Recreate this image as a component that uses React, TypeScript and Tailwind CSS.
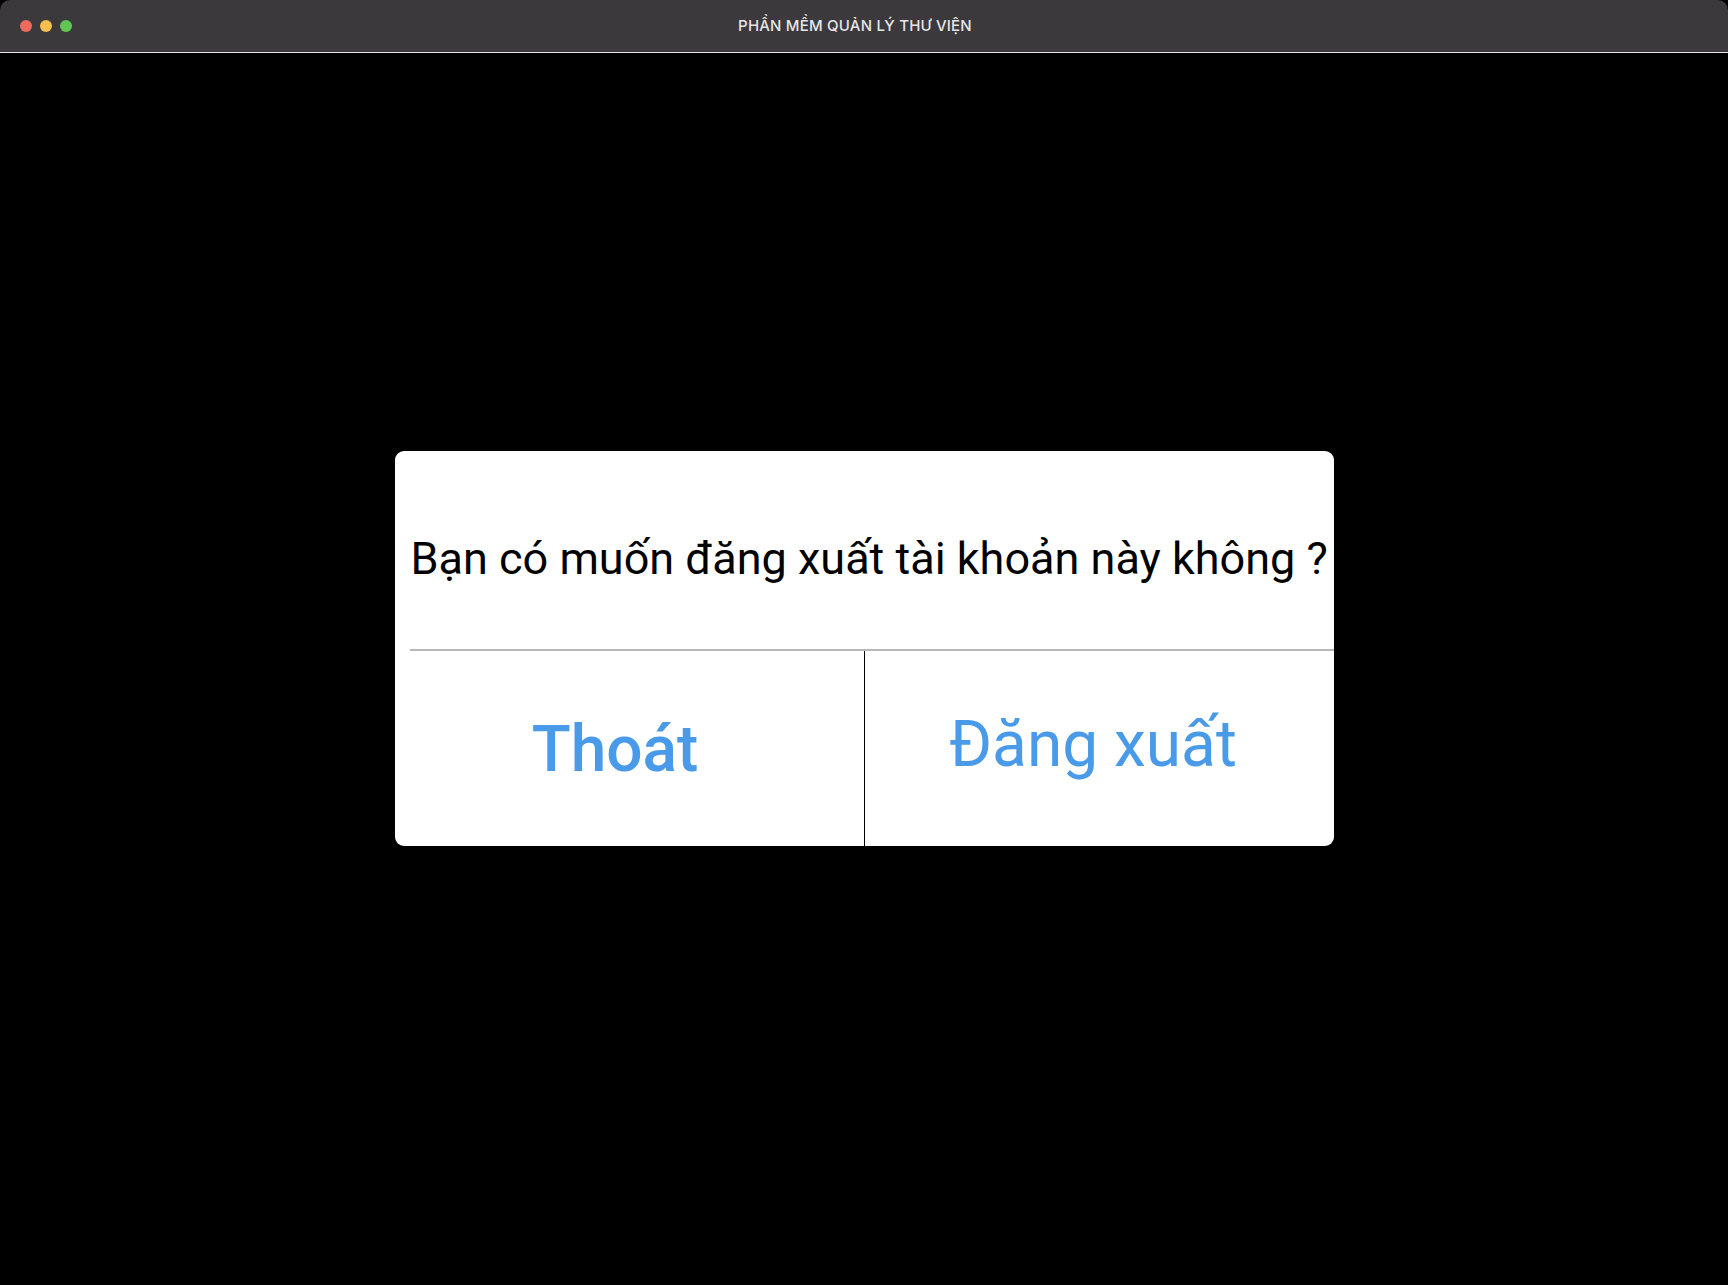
export default function App() {
  return (
    <div className="w-[1728px] h-[1285px] bg-black flex flex-col overflow-hidden">
      {/* Title bar */}
      <div className="relative h-[53px] shrink-0 bg-[#3b393c] border-b border-[#e6e6e6] flex items-center justify-center pr-[18px] rounded-t-[10px]">
        <div className="absolute left-[20px] top-[20px] flex gap-[8px]">
          <span className="w-[12px] h-[12px] rounded-full bg-[#ec6a5e]" />
          <span className="w-[12px] h-[12px] rounded-full bg-[#f4bf4f]" />
          <span className="w-[12px] h-[12px] rounded-full bg-[#61c554]" />
        </div>
        <span className="text-[15px] font-medium tracking-[0.2px] text-[#e6e6e6] font-['Inter',sans-serif]">
          PHẦN MỀM QUẢN LÝ THƯ VIỆN
        </span>
      </div>

      {/* Content */}
      <div className="flex-1 flex justify-center pt-[398px]">
        <div className="w-[939px] h-[395px] bg-white rounded-[9px] flex flex-col font-['Roboto',sans-serif] overflow-hidden">
          <div className="h-[198px] flex items-center pl-[16px] pt-[16px]">
            <p className="text-[45px] text-black whitespace-nowrap leading-none">
              Bạn có muốn đăng xuất tài khoản này không ?
            </p>
          </div>
          <div className="ml-[15px] h-[2px] bg-[#b8b8b8]" />
          <div className="flex-1 flex">
            <button className="w-[470px] border-r border-black flex items-center justify-center pr-[28px] pt-[2px] text-[#4a9aea] text-[64px] font-medium leading-none">
              Thoát
            </button>
            <button className="flex-1 flex items-center justify-center pr-[12px] pb-[8px] text-[#4a9aea] text-[64px] leading-none">
              Đăng xuất
            </button>
          </div>
        </div>
      </div>
    </div>
  );
}
